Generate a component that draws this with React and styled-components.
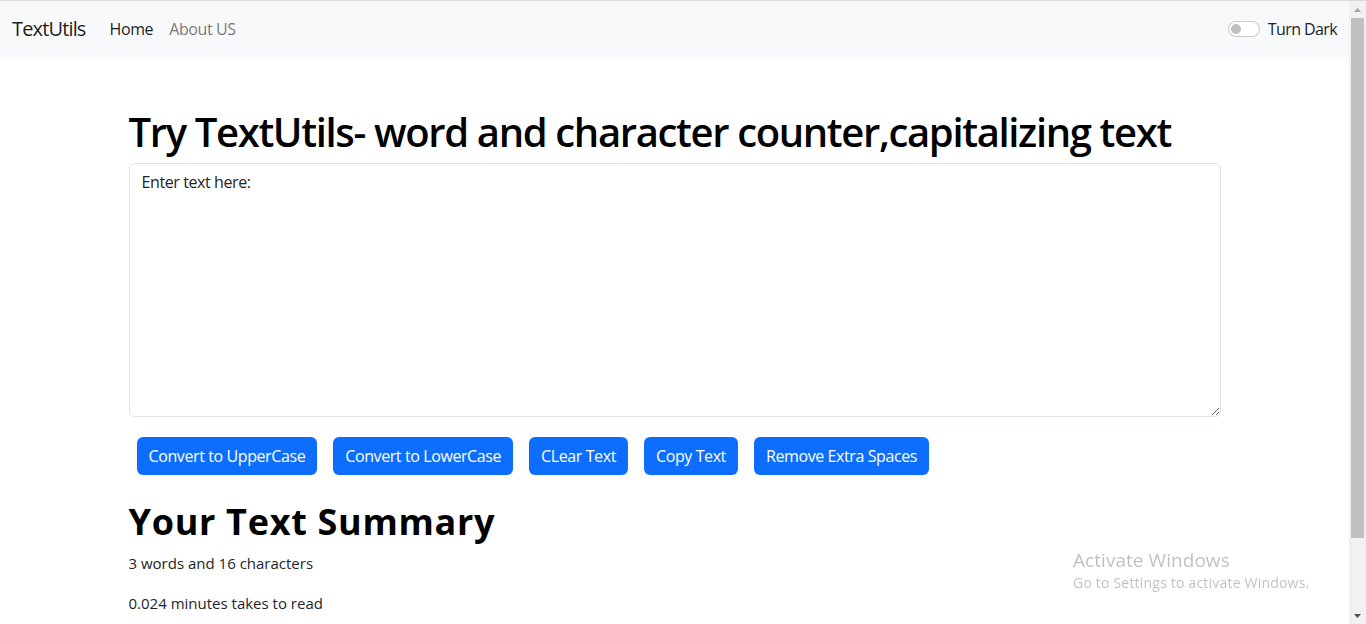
import React from 'react';
import styled, { createGlobalStyle } from 'styled-components';

const GlobalStyle = createGlobalStyle`
  html, body {
    margin: 0;
    padding: 0;
    height: 100%;
    overflow: hidden;
  }
  body {
    font-family: "Open Sans", "Noto Sans", sans-serif;
    font-size: 16px;
    line-height: 1.5;
    color: #212529;
    background: #fff;
  }
`

const Frame = styled.div`
  display: flex;
  height: 624px;
  border-top: 1px solid #dadada;
  box-sizing: border-box;
`
const Page = styled.div`
  flex: 1;
  min-width: 0;
`
const Navbar = styled.nav`
  display: flex;
  align-items: center;
  height: 56px;
  padding: 0 12px;
  background-color: #f8f9fa;
`
const Brand = styled.a`
  font-size: 20px;
  color: rgba(0, 0, 0, 0.9);
  margin-right: 16px;
  letter-spacing: -0.85px;
`
const NavLink = styled.a`
  padding: 0 8px;
  font-size: 16px;
  letter-spacing: -0.4px;
  color: ${p => (p.$active ? 'rgba(0,0,0,0.9)' : 'rgba(0,0,0,0.55)')};
`
const Spacer = styled.div`
  flex: 1;
`
const SwitchWrap = styled.label`
  display: flex;
  align-items: center;
  gap: 8px;
  font-size: 16px;
  letter-spacing: -0.6px;
  color: #212529;
`
const Switch = styled.span`
  display: flex;
  align-items: center;
  width: 32px;
  height: 16px;
  box-sizing: border-box;
  border: 1px solid rgba(0, 0, 0, 0.2);
  border-radius: 8px;
  padding: 0 2px;
  background: #fff;

  &::before {
    content: '';
    width: 10px;
    height: 10px;
    border-radius: 50%;
    background: #bfbfbf;
  }
`
const Container = styled.main`
  width: 1092px;
  margin: 0 auto;
  padding-top: 51px;
`
const Title = styled.h1`
  margin: 0 0 7px;
  font-size: 40px;
  font-weight: 600;
  line-height: 1.2;
  letter-spacing: -1.35px;
  color: #000;
`
const TextBox = styled.textarea`
  display: block;
  width: 100%;
  height: 254px;
  box-sizing: border-box;
  padding: 6px 12px;
  border: 1px solid #dee2e6;
  border-radius: 6px;
  font-family: inherit;
  font-size: 16px;
  line-height: 1.5;
  letter-spacing: -0.4px;
  color: #212529;
  resize: vertical;
  outline: none;
`
const ButtonRow = styled.div`
  display: flex;
  gap: 16px;
  padding: 20px 8px 0;
`
const Button = styled.button`
  height: 38px;
  padding: 0 12px;
  border: none;
  border-radius: 6px;
  background-color: #0d6efd;
  color: #fff;
  font-family: inherit;
  font-size: 16px;
  letter-spacing: -0.4px;
  cursor: pointer;
`
const Summary = styled.section`
  padding-top: 25px;
`
const SummaryTitle = styled.h2`
  margin: 0 0 8px;
  font-size: 36px;
  font-weight: 700;
  line-height: 1.2;
  letter-spacing: 0.7px;
  color: #000;
`
const Para = styled.p`
  margin: 0 0 16px;
  font-size: 15px;
  line-height: 24px;
  letter-spacing: 0;
  color: #212529;
`
const Scrollbar = styled.div`
  display: flex;
  flex-direction: column;
  align-items: center;
  width: 17px;
  background: #f1f1f1;
`
const Arrow = styled.div`
  height: 17px;
  display: flex;
  align-items: center;
  justify-content: center;
`
const Thumb = styled.div`
  width: 13px;
  height: 520px;
  background: #c1c1c1;
`
const Track = styled.div`
  flex: 1;
`
const Watermark = styled.div`
  position: fixed;
  left: 1073px;
  top: 547px;
  color: rgba(0, 0, 0, 0.25);
  font-family: "Open Sans", sans-serif;
`
const WmTitle = styled.div`
  font-size: 19px;
  line-height: 26px;
  letter-spacing: 0.05px;
`
const WmSub = styled.div`
  font-size: 14px;
  line-height: 20px;
  letter-spacing: 0.2px;
`

const buttons = [
  'Convert to UpperCase',
  'Convert to LowerCase',
  'CLear Text',
  'Copy Text',
  'Remove Extra Spaces',
];

const App = () => {
  return (
    <>
      <GlobalStyle />
      <Frame>
        <Page>
          <Navbar>
            <Brand>TextUtils</Brand>
            <NavLink $active>Home</NavLink>
            <NavLink>About US</NavLink>
            <Spacer />
            <SwitchWrap>
              <Switch />
              Turn Dark
            </SwitchWrap>
          </Navbar>
          <Container>
            <Title>Try TextUtils- word and character counter,capitalizing text</Title>
            <TextBox rows={10} defaultValue="Enter text here:" />
            <ButtonRow>
              {buttons.map(b => (
                <Button key={b}>{b}</Button>
              ))}
            </ButtonRow>
            <Summary>
              <SummaryTitle>Your Text Summary</SummaryTitle>
              <Para>3 words and 16 characters</Para>
              <Para>0.024 minutes takes to read</Para>
            </Summary>
          </Container>
        </Page>
        <Scrollbar>
          <Arrow>
            <svg width="7" height="4" viewBox="0 0 7 4"><path d="M0 4L3.5 0L7 4Z" fill="#a3a3a3" /></svg>
          </Arrow>
          <Thumb />
          <Track />
          <Arrow>
            <svg width="7" height="4" viewBox="0 0 7 4"><path d="M0 0L3.5 4L7 0Z" fill="#505050" /></svg>
          </Arrow>
        </Scrollbar>
      </Frame>
      <Watermark>
        <WmTitle>Activate Windows</WmTitle>
        <WmSub>Go to Settings to activate Windows.</WmSub>
      </Watermark>
    </>
  );
};

export default App;
